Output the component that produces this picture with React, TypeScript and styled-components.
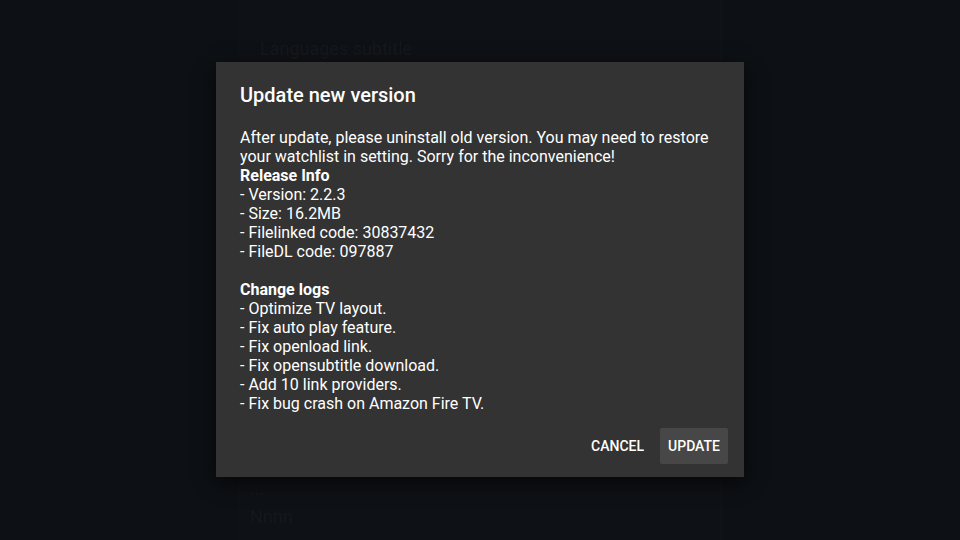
import React from 'react'
import styled, { createGlobalStyle } from 'styled-components'

const GlobalStyle = createGlobalStyle`
  html, body {
    margin: 0;
    padding: 0;
    background: #0d1014;
  }
  body {
    font-family: Roboto, 'Noto Sans', Arial, sans-serif;
  }
`

const Screen = styled.div`
  position: relative;
  width: 960px;
  height: 540px;
  overflow: hidden;
  background: #0d1014;
`

const SettingsPanel = styled.div`
  margin: 0 auto;
  width: 484px;
  height: 540px;
  background: #0e1115;
  border-right: 1px solid #111418;
  padding: 38px 0 0 22px;
  box-sizing: border-box;
  display: flex;
  flex-direction: column;
`

const SettingLabel = styled.div<{ $gap?: number; $indent?: number }>`
  color: #15181c;
  font-size: 18px;
  margin-top: ${(p) => p.$gap ?? 0}px;
  margin-left: ${(p) => p.$indent ?? 0}px;
`

const Overlay = styled.div`
  position: absolute;
  inset: 0;
  display: flex;
  align-items: flex-start;
  justify-content: center;
  padding-top: 62px;
`

const Dialog = styled.div`
  width: 528px;
  height: 415px;
  box-sizing: border-box;
  background: #333333;
  box-shadow: 0 6px 18px rgba(0, 0, 0, 0.6);
  padding: 21px 16px 13px 24px;
  display: flex;
  flex-direction: column;
  color: #ffffff;
`

const Title = styled.h2`
  margin: 0;
  font-size: 20px;
  line-height: 24px;
  font-weight: 500;
`

const Body = styled.div`
  margin-top: 21px;
  font-size: 16px;
  line-height: 19px;
  flex: 1;
`

const Line = styled.div<{ $bold?: boolean }>`
  font-weight: ${(p) => (p.$bold ? 700 : 400)};
  min-height: 19px;
`

const Actions = styled.div`
  display: flex;
  justify-content: flex-end;
`

const Button = styled.button<{ $focused?: boolean }>`
  background: ${(p) => (p.$focused ? '#474747' : 'transparent')};
  border: none;
  color: #ffffff;
  font-family: Roboto, Arial, sans-serif;
  font-size: 14px;
  font-weight: 500;
  text-transform: uppercase;
  height: 36px;
  padding: 0 8px;
  margin-left: 8px;
  border-radius: 2px;
`

const releaseInfo = [
  '- Version: 2.2.3',
  '- Size: 16.2MB',
  '- Filelinked code: 30837432',
  '- FileDL code: 097887',
]

const changeLogs = [
  '- Optimize TV layout.',
  '- Fix auto play feature.',
  '- Fix openload link.',
  '- Fix opensubtitle download.',
  '- Add 10 link providers.',
  '- Fix bug crash on Amazon Fire TV.',
]

export default function App() {
  return (
    <>
      <GlobalStyle />
      <Screen>
        <SettingsPanel>
          <SettingLabel>Languages subtitle</SettingLabel>
          <SettingLabel $gap={419} $indent={-10}>...</SettingLabel>
          <SettingLabel $gap={7} $indent={-10}>Nnnn</SettingLabel>
        </SettingsPanel>
        <Overlay>
          <Dialog>
            <Title>Update new version</Title>
            <Body>
              <Line>After update, please uninstall old version. You may need to restore</Line>
              <Line>your watchlist in setting. Sorry for the inconvenience!</Line>
              <Line $bold>Release Info</Line>
              {releaseInfo.map((l) => (
                <Line key={l}>{l}</Line>
              ))}
              <Line />
              <Line $bold>Change logs</Line>
              {changeLogs.map((l) => (
                <Line key={l}>{l}</Line>
              ))}
            </Body>
            <Actions>
              <Button>Cancel</Button>
              <Button $focused>Update</Button>
            </Actions>
          </Dialog>
        </Overlay>
      </Screen>
    </>
  )
}
